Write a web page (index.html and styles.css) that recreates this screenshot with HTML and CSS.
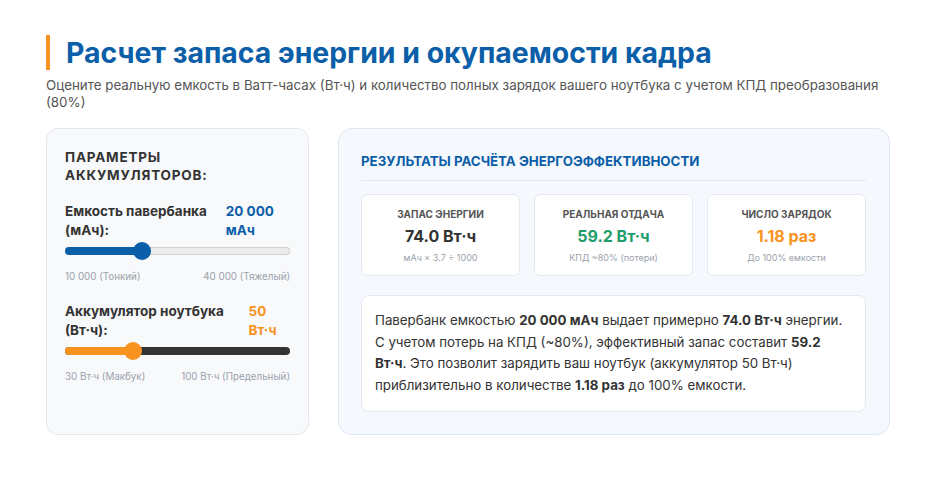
FILE: index.html
```html
<!DOCTYPE html>
<html lang="ru">
<head>
  <meta charset="UTF-8">
  <meta name="viewport" content="width=device-width, initial-scale=1.0">
  <title>Расчет запаса энергии</title>
  <link rel="stylesheet" href="styles.css">
</head>
<body>
  <div class="container">
    <h1>Расчет запаса энергии и окупаемости кадра</h1>
    <p class="subtitle">Оцените реальную емкость в Ватт-часах (Вт·ч) и количество полных зарядок вашего ноутбука с учетом КПД преобразования (80%)</p>

    <div class="layout">
      <div class="panel params">
        <h3>Параметры аккумуляторов:</h3>

        <div class="field">
          <div class="field-head">
            <span class="field-label">Емкость павербанка (мАч):</span>
            <span class="field-value blue">20&nbsp;000 мАч</span>
          </div>
          <div class="track light">
            <div class="fill blue-fill" style="width: 34%"></div>
            <div class="thumb blue-fill" style="left: 34%"></div>
          </div>
          <div class="range-labels">
            <span>10 000 (Тонкий)</span>
            <span>40 000 (Тяжелый)</span>
          </div>
        </div>

        <div class="field">
          <div class="field-head">
            <span class="field-label">Аккумулятор ноутбука (Вт·ч):</span>
            <span class="field-value orange">50 Вт·ч</span>
          </div>
          <div class="track dark">
            <div class="fill orange-fill" style="width: 30%"></div>
            <div class="thumb orange-fill" style="left: 30%"></div>
          </div>
          <div class="range-labels">
            <span>30 Вт·ч (Макбук)</span>
            <span>100 Вт·ч (Предельный)</span>
          </div>
        </div>
      </div>

      <div class="panel results">
        <h3>Результаты расчёта энергоэффективности</h3>

        <div class="stats">
          <div class="stat">
            <div class="stat-title">Запас энергии</div>
            <div class="stat-value">74.0 Вт·ч</div>
            <div class="stat-note">мАч × 3.7 ÷ 1000</div>
          </div>
          <div class="stat">
            <div class="stat-title">Реальная отдача</div>
            <div class="stat-value green">59.2 Вт·ч</div>
            <div class="stat-note">КПД ~80% (потери)</div>
          </div>
          <div class="stat">
            <div class="stat-title">Число зарядок</div>
            <div class="stat-value orange">1.18 раз</div>
            <div class="stat-note">До 100% емкости</div>
          </div>
        </div>

        <div class="summary">
          Павербанк емкостью <b>20 000 мАч</b> выдает примерно <b>74.0 Вт·ч</b> энергии.
          С учетом потерь на КПД (~80%), эффективный запас составит <b>59.2 Вт·ч</b>.
          Это позволит зарядить ваш ноутбук (аккумулятор 50 Вт·ч) приблизительно в количестве
          <b>1.18 раз</b> до 100% емкости.
        </div>
      </div>
    </div>
  </div>
</body>
</html>
```

FILE: styles.css
```css
body {
  font-family: 'Inter', 'Noto Sans', sans-serif;
  background-color: #fff;
  color: #333;
  margin: 0;
  padding: 0;
}

.container {
  width: 844px;
  margin-left: 46px;
  padding-top: 35px;
}

h1 {
  margin: 0 0 7px;
  padding-left: 16px;
  border-left: 4px solid #f7931e;
  font-size: 28.4px;
  line-height: 35px;
  font-weight: 700;
  color: #0b5ea8;
}

.subtitle {
  margin: 0;
  font-size: 13.35px;
  line-height: 17px;
  color: #555;
}

.layout {
  display: grid;
  grid-template-columns: 263px 1fr;
  gap: 29px;
  margin-top: 17px;
}

.panel {
  border-radius: 12px;
  border: 1px solid #e3e8ef;
  background-color: #f8f9fb;
}

.params {
  padding: 19px 18px;
}

.params h3 {
  margin: 0 0 18px;
  font-size: 13.5px;
  line-height: 18px;
  letter-spacing: 0.8px;
  text-transform: uppercase;
  color: #333;
}

.field {
  margin-bottom: 20px;
}

.field-head {
  display: flex;
  justify-content: space-between;
  gap: 10px;
  font-size: 13.5px;
  line-height: 18.5px;
  font-weight: 700;
}

.field-value.blue {
  color: #0b5ea8;
}

.field-value.orange {
  color: #f7931e;
}

.track {
  position: relative;
  height: 8px;
  margin: 8px 0 16px;
  border-radius: 4px;
}

.track.light {
  background-color: #ececec;
  box-shadow: inset 0 0 0 1px #cfcfcf;
}

.track.dark {
  background-color: #333;
}

.fill {
  height: 100%;
  border-radius: 4px;
}

.thumb {
  position: absolute;
  top: 50%;
  width: 18px;
  height: 18px;
  margin: -9px 0 0 -9px;
  border-radius: 50%;
}

.blue-fill {
  background-color: #0b5ea8;
}

.orange-fill {
  background-color: #f7931e;
}

.range-labels {
  display: flex;
  justify-content: space-between;
  font-size: 9.8px;
  color: #9aa1ab;
}

.results {
  padding: 23px 23px 22px 22px;
  background-color: #f5f8fc;
  border-color: #dde6f1;
  border-radius: 14px;
}

.results h3 {
  margin: 0 0 13px;
  padding-bottom: 10px;
  border-bottom: 1px solid #e2e8f0;
  font-size: 13.3px;
  line-height: 18px;
  letter-spacing: 0;
  text-transform: uppercase;
  color: #0b5ea8;
}

.stats {
  display: grid;
  grid-template-columns: repeat(3, 1fr);
  gap: 14px;
  margin-bottom: 19px;
}

.stat {
  padding: 13px 8px 12px;
  background-color: #fff;
  border: 1px solid #e5e8ee;
  border-radius: 6px;
  text-align: center;
}

.stat-title {
  font-size: 10px;
  font-weight: 700;
  text-transform: uppercase;
  color: #555;
  margin-bottom: 6px;
}

.stat-value {
  font-size: 16px;
  line-height: 20px;
  font-weight: 700;
  color: #333;
  margin-bottom: 6px;
}

.stat-value.green {
  color: #1f9d6b;
}

.stat-value.orange {
  color: #f7931e;
}

.stat-note {
  font-size: 9px;
  color: #9aa1ab;
}

.summary {
  padding: 14px 13px 15px;
  background-color: #fff;
  border: 1px solid #e5e8ee;
  border-radius: 8px;
  font-size: 13.3px;
  line-height: 21.5px;
  color: #333;
}
```
